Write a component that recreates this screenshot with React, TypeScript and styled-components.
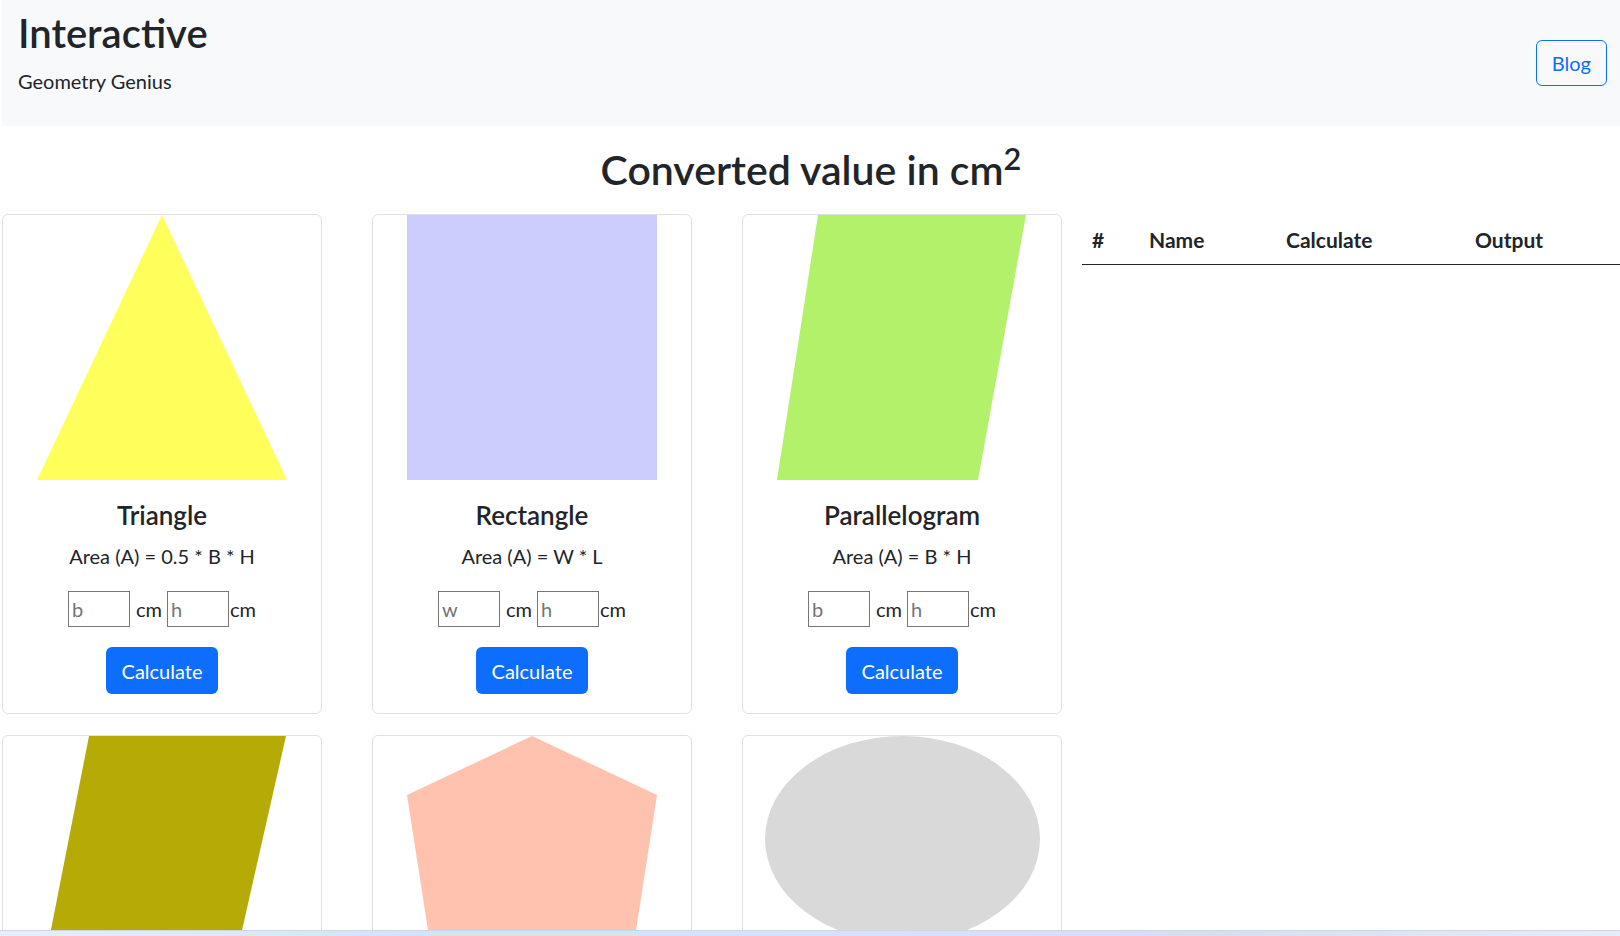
import React from 'react';
import styled, { createGlobalStyle } from 'styled-components';

const GlobalStyle = createGlobalStyle`
  *, *::before, *::after { box-sizing: border-box; }
  body {
    margin: 0;
    font-family: Lato, "Open Sans", "DejaVu Sans", sans-serif;
    color: #212529;
    background: #ffffff;
  }
`;

const Page = styled.div`
  padding-left: 2px;
`;

const Header = styled.header`
  height: 126px;
  background: #f8f9fa;
  display: flex;
  justify-content: space-between;
  align-items: center;
  padding: 0 13px 0 16px;
`;

const Brand = styled.div`
  align-self: flex-start;
  padding-top: 9px;
`;

const BrandTitle = styled.h1`
  margin: 0 0 9px;
  font-size: 40px;
  font-weight: 600;
  line-height: 1.2;
`;

const BrandSub = styled.p`
  margin: 0;
  font-size: 20px;
  line-height: 1.5;
`;

const OutlineButton = styled.button`
  height: 46px;
  padding: 0 15px;
  font-family: inherit;
  font-size: 20px;
  color: #0d6efd;
  background: transparent;
  border: 1px solid #0d6efd;
  border-radius: 6px;
  cursor: pointer;
`;

const PageTitle = styled.h1`
  margin: 20px 0 20px;
  text-align: center;
  font-size: 41px;
  font-weight: 600;
  line-height: 48px;

  sup {
    font-size: 0.75em;
    line-height: 0;
    position: relative;
    vertical-align: baseline;
    top: -0.5em;
  }
`;

const Main = styled.div`
  display: flex;
  align-items: flex-start;
  gap: 20px;
`;

const CardGrid = styled.div`
  display: grid;
  grid-template-columns: repeat(3, 320px);
  column-gap: 50px;
  row-gap: 21px;
`;

const Card = styled.div`
  display: flex;
  flex-direction: column;
  align-items: center;
  background: #fff;
  border: 1px solid #dfe0e1;
  border-radius: 6px;
  overflow: hidden;
`;

const ShapeSvg = styled.svg`
  display: block;
  flex: none;
`;

const CardBody = styled.div`
  width: 100%;
  padding: 20px 16px 19px;
  display: flex;
  flex-direction: column;
  align-items: center;
`;

const CardTitle = styled.h4`
  margin: 0 0 10px;
  font-size: 26px;
  font-weight: 600;
  line-height: 1.2;
`;

const Formula = styled.p`
  margin: 0 0 20px;
  font-size: 20px;
  line-height: 1.5;
`;

const InputRow = styled.div`
  display: flex;
  align-items: center;
  height: 36px;
  font-size: 20px;
`;

const SizeInput = styled.input`
  width: 62px;
  height: 36px;
  padding: 0 3px;
  font-family: inherit;
  font-size: 20px;
  color: #212529;
  border: 1px solid #767676;
  border-radius: 0;
  background: #fff;

  &::placeholder {
    color: #757575;
  }
`;

const Unit = styled.span<{ $last?: boolean }>`
  line-height: 36px;
  margin: ${(p) => (p.$last ? '0 0 0 1px' : '0 5px 0 6px')};
`;

const PrimaryButton = styled.button`
  margin-top: 20px;
  height: 47px;
  padding: 0 16px;
  font-family: inherit;
  font-size: 20px;
  color: #fff;
  background: #0d6efd;
  border: none;
  border-radius: 6px;
  cursor: pointer;
`;

const ResultTable = styled.table`
  width: 538px;
  border-collapse: collapse;
  table-layout: fixed;
  flex: none;
`;

const HeadCell = styled.th<{ $w: number }>`
  width: ${(p) => p.$w}px;
  padding: 14px 8px 12px 10px;
  text-align: left;
  font-size: 21px;
  font-weight: 700;
  line-height: 24px;
  white-space: nowrap;
  border-bottom: 1px solid #212529;
`;

const BottomStrip = styled.div`
  position: fixed;
  left: 0;
  right: 0;
  bottom: 0;
  height: 6px;
  border-top: 1px solid #c9d6ec;
  background: linear-gradient(90deg, #e6eff9 0%, #d6e2f6 25%, #d7e2f7 55%, #d9ddf2 75%, #e4edf8 100%);
`;

type Shape = {
  name: string;
  formula: string;
  inputs: [string, string];
  w: number;
  h: number;
  draw: React.ReactNode;
};

const shapes: Shape[] = [
  {
    name: 'Triangle',
    formula: 'Area (A) = 0.5 * B * H',
    inputs: ['b', 'h'],
    w: 250,
    h: 265,
    draw: <polygon points="0,265 125,0 250,265" fill="#ffff5c" />,
  },
  {
    name: 'Rectangle',
    formula: 'Area (A) = W * L',
    inputs: ['w', 'h'],
    w: 250,
    h: 265,
    draw: <rect x="0" y="0" width="250" height="265" fill="#ccccfd" />,
  },
  {
    name: 'Parallelogram',
    formula: 'Area (A) = B * H',
    inputs: ['b', 'h'],
    w: 250,
    h: 265,
    draw: <polygon points="41,0 249,0 201,265 0,265" fill="#b3f16b" />,
  },
  {
    name: 'Trapezoid',
    formula: 'Area (A) = 0.5 * (A + B) * H',
    inputs: ['a', 'b'],
    w: 250,
    h: 265,
    draw: <polygon points="52,0 249,0 189,265 0,265" fill="#b5aa06" />,
  },
  {
    name: 'Pentagon',
    formula: 'Area (A) = 0.5 * P * a',
    inputs: ['p', 'a'],
    w: 250,
    h: 265,
    draw: <polygon points="125,0 250,59 218,265 32,265 0,59" fill="#ffc2ae" />,
  },
  {
    name: 'Ellipse',
    formula: 'Area (A) = π * A * B',
    inputs: ['a', 'b'],
    w: 275,
    h: 206,
    draw: <ellipse cx="137.5" cy="103" rx="137.5" ry="103" fill="#d9d9d9" />,
  },
];

const columns: { label: string; w: number }[] = [
  { label: '#', w: 57 },
  { label: 'Name', w: 137 },
  { label: 'Calculate', w: 189 },
  { label: 'Output', w: 155 },
];

export default function App() {
  return (
    <Page>
      <GlobalStyle />
      <Header>
        <Brand>
          <BrandTitle>Interactive</BrandTitle>
          <BrandSub>Geometry Genius</BrandSub>
        </Brand>
        <OutlineButton>Blog</OutlineButton>
      </Header>

      <PageTitle>
        Converted value in cm<sup>2</sup>
      </PageTitle>

      <Main>
        <CardGrid>
          {shapes.map((s) => (
            <Card key={s.name}>
              <ShapeSvg width={s.w} height={s.h} viewBox={`0 0 ${s.w} ${s.h}`}>
                {s.draw}
              </ShapeSvg>
              <CardBody>
                <CardTitle>{s.name}</CardTitle>
                <Formula>{s.formula}</Formula>
                <InputRow>
                  <SizeInput placeholder={s.inputs[0]} />
                  <Unit>cm</Unit>
                  <SizeInput placeholder={s.inputs[1]} />
                  <Unit $last>cm</Unit>
                </InputRow>
                <PrimaryButton>Calculate</PrimaryButton>
              </CardBody>
            </Card>
          ))}
        </CardGrid>

        <ResultTable>
          <thead>
            <tr>
              {columns.map((c) => (
                <HeadCell key={c.label} $w={c.w}>
                  {c.label}
                </HeadCell>
              ))}
            </tr>
          </thead>
          <tbody />
        </ResultTable>
      </Main>
      <BottomStrip />
    </Page>
  );
}
